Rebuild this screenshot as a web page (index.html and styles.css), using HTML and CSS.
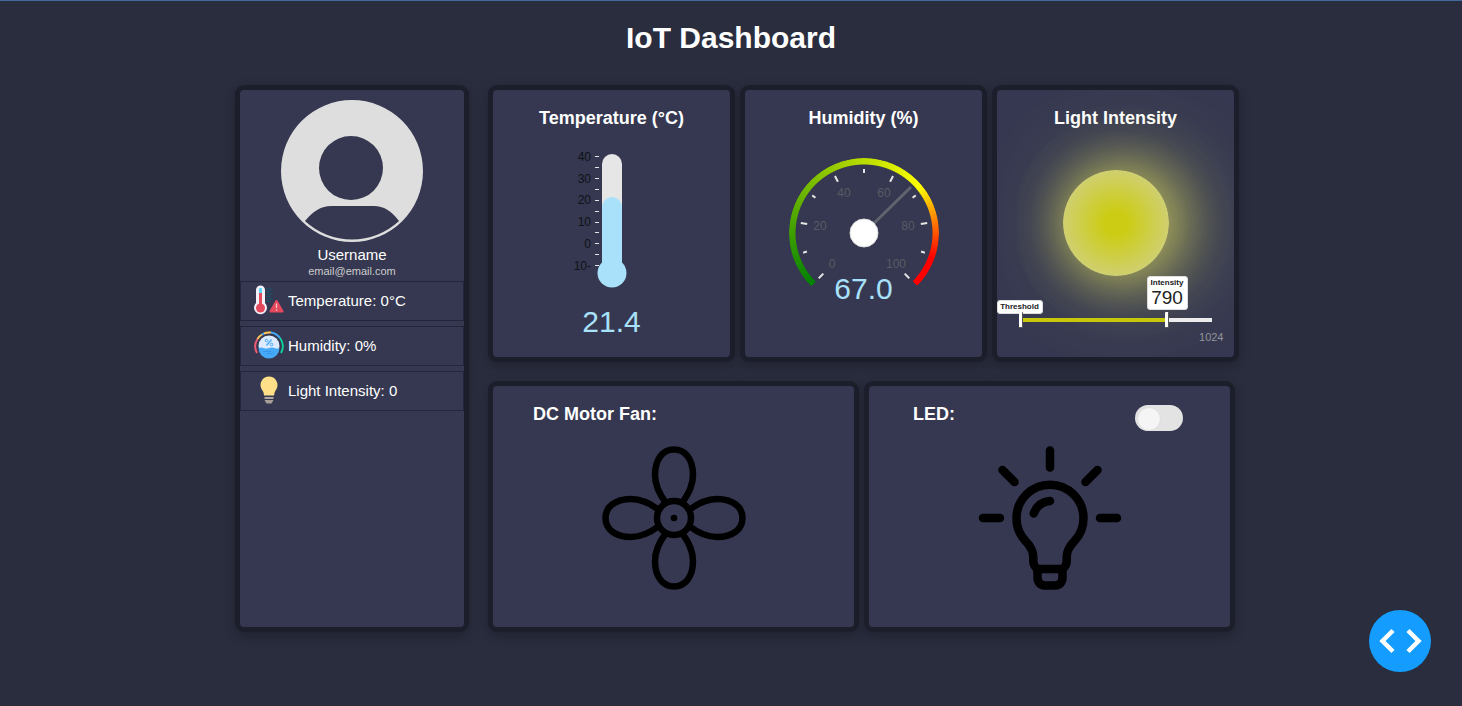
FILE: index.html
```html
<!DOCTYPE html>
<html lang="en">
<head>
<meta charset="utf-8">
<meta name="viewport" content="width=device-width, initial-scale=1">
<title>IoT Dashboard</title>
<link rel="stylesheet" href="styles.css">
</head>
<body>
<header class="page-header"><h1>IoT Dashboard</h1></header>
<main class="dashboard">
  <aside class="panel sidebar">
    <svg class="avatar" viewBox="0 0 142 142" aria-hidden="true">
      <path fill="#dedede" fill-rule="evenodd" d="M71 0a71 71 0 1 1 0 142a71 71 0 1 1 0-142zM70 36a32 32 0 1 0 0 64a32 32 0 1 0 0-64zM24 121Q36 106 50 106H93Q107 106 118 121A69 69 0 0 1 24 121z"/>
    </svg>
    <div class="username">Username</div>
    <div class="email">email@email.com</div>
    <ul class="readings">
      <li class="reading">
        <svg class="reading-icon" viewBox="0 0 30 30" aria-hidden="true">
          <path d="M2 5a4.500 4.500 0 0 1 9 0v13a6.500 6.500 0 1 1-9 0z" fill="#f4f0fa"/>
          <rect x="5" y="3" width="3" height="6" rx="1" fill="#55d8f5"/>
          <rect x="5" y="8" width="3" height="14" fill="#e4485d"/>
          <circle cx="6.500" cy="23" r="4.500" fill="#e4485d"/>
          <path d="M12.500 4h6M12.500 6.500h4M12.500 9h6M12.500 11.500h4M12.500 14h6M12.500 16.500h4" stroke="#14576f"/>
          <path d="M21.500 15.500q1-1 2 0l6 10.500q.5 1.500-1 1.500h-12q-1.500 0-1-1.500z" fill="#e4485d"/>
          <path d="M22.500 18.500v4.500M22.500 24.300v1.500" stroke="#f5c5cf" stroke-width="1.300"/>
        </svg>
        <span>Temperature: 0°C</span>
      </li>
      <li class="reading">
        <svg class="reading-icon" viewBox="0 0 30 30" aria-hidden="true">
          <g fill="none" stroke-width="2">
            <path d="M3 23A13.500 13.500 0 0 1 3.500 9" stroke="#ef5b72"/>
            <path d="M3.500 9A13.500 13.500 0 0 1 8 4.500" stroke="#ffc857"/>
            <path d="M8 4.500l2-1" stroke="#45a9f5"/>
            <path d="M10 3.500A13.500 13.500 0 0 1 17 2.500" stroke="#ffc857"/>
            <path d="M17 2.500A13.500 13.500 0 0 1 26 8" stroke="#45a9f5"/>
            <path d="M26 8A13.500 13.500 0 0 1 27 23" stroke="#0bd39a"/>
          </g>
          <circle cx="15" cy="16" r="10.500" fill="#dcebff"/>
          <path d="M4.500 18Q7 17 9.500 18T15 18T20.500 18T25.500 18A10.500 10.500 0 0 1 4.500 18z" fill="#46a9f7"/>
          <path d="M9 21.500h8M13 23.500h6" stroke="#3597e6"/>
          <path d="M17.500 9.500l-5 6" stroke="#46a9f7" stroke-width="1.300"/>
          <circle cx="12.500" cy="10.500" r="1.300" fill="none" stroke="#46a9f7"/>
          <circle cx="17.500" cy="14.500" r="1.300" fill="none" stroke="#46a9f7"/>
        </svg>
        <span>Humidity: 0%</span>
      </li>
      <li class="reading">
        <svg class="reading-icon" viewBox="0 0 30 30" aria-hidden="true">
          <path d="M10 20Q10 17 7.500 14A8.500 8.500 0 1 1 22.500 14Q20 17 20 20.500H10z" fill="#ffdf87"/>
          <path d="M10.500 22h9v2h-9z" fill="#b0a7a0"/>
          <path d="M10.500 25h9l-2 3.500h-5z" fill="#a79e98"/>
        </svg>
        <span>Light Intensity: 0</span>
      </li>
    </ul>
  </aside>

  <div class="content">
    <div class="row gauges">
      <section class="panel gauge-card">
        <h2>Temperature (°C)</h2>
        <svg class="gauge" width="238" height="150" viewBox="0 0 238 150" aria-hidden="true">
          <rect x="109" y="13" width="20" height="125" rx="10" fill="#e6e6e6"/>
          <path d="M109 66a10 10 0 0 1 20 0v56h-20z" fill="#a9e1fb"/>
          <circle cx="119" cy="132" r="14.500" fill="#a9e1fb"/>
          <path class="scale-ticks" d="M102 15.500h4M102 26.500h4M102 37.500h4M102 48.500h4M102 59.500h4M102 70.500h4M102 81.500h4M102 91.500h4M102 102.500h4M102 113.500h4M102 124.500h4"/>
          <g class="thermo-labels">
            <text x="98" y="20">40</text><text x="98" y="42">30</text><text x="98" y="63">20</text>
            <text x="98" y="85">10</text><text x="98" y="107">0</text><text x="98" y="129">10-</text>
          </g>
        </svg>
        <output class="value temperature-value">21.4</output>
      </section>

      <section class="panel gauge-card">
        <h2>Humidity (%)</h2>
        <div class="dial">
          <div class="dial-arc"></div>
          <svg class="dial-face" viewBox="-75 -75 150 150" aria-hidden="true">
            <g class="dial-ticks">
              <path d="M0-64v6.500" transform="rotate(-135)"/>
              <path d="M0-64v6.500" transform="rotate(-81)"/>
              <path d="M0-64v6.500" transform="rotate(-27)"/>
              <path d="M0-64v6.500" transform="rotate(27)"/>
              <path d="M0-64v6.500" transform="rotate(81)"/>
              <path d="M0-64v6.500" transform="rotate(135)"/>
              <path d="M0-64v4" transform="rotate(-108)"/>
              <path d="M0-64v4" transform="rotate(-54)"/>
              <path d="M0-64v4"/>
              <path d="M0-64v4" transform="rotate(54)"/>
              <path d="M0-64v4" transform="rotate(108)"/>
            </g>
            <g class="dial-labels">
              <text x="-32" y="35">0</text><text x="-44" y="-3">20</text><text x="-20" y="-36">40</text>
              <text x="20" y="-36">60</text><text x="44" y="-3">80</text><text x="32" y="35">100</text>
            </g>
            <path d="M0 0L47-46" stroke="#60646e" stroke-width="3"/>
            <circle r="14" fill="#fff" stroke="#ddd"/>
          </svg>
        </div>
        <output class="value humidity-value">67.0</output>
      </section>

      <section class="panel gauge-card">
        <h2>Light Intensity</h2>
        <div class="sun"></div>
        <div class="slider">
          <input class="range range-intensity" type="range" min="0" max="1024" value="790" aria-label="Intensity">
          <input class="range range-threshold" type="range" min="0" max="1024" value="0" aria-label="Threshold">
          <div class="tag tag-threshold">Threshold</div>
          <div class="tag tag-intensity">Intensity<output class="tag-value">790</output></div>
          <span class="slider-max">1024</span>
        </div>
      </section>
    </div>

    <div class="row devices">
      <section class="panel device-card">
        <div class="device-head fan-head"><h2>DC Motor Fan:</h2></div>
        <svg class="device-icon" viewBox="-72 -72 144 144" aria-hidden="true">
          <g fill="none" stroke="#000" stroke-width="6.500">
            <circle r="17"/>
            <path d="M-8-15C-14-23-19-32-19-43C-19-59-11-68.500 0-68.500C11-68.500 19-59 19-43C19-32 14-23 8-15"/>
            <path d="M-8-15C-14-23-19-32-19-43C-19-59-11-68.500 0-68.500C11-68.500 19-59 19-43C19-32 14-23 8-15" transform="rotate(90)"/>
            <path d="M-8-15C-14-23-19-32-19-43C-19-59-11-68.500 0-68.500C11-68.500 19-59 19-43C19-32 14-23 8-15" transform="rotate(180)"/>
            <path d="M-8-15C-14-23-19-32-19-43C-19-59-11-68.500 0-68.500C11-68.500 19-59 19-43C19-32 14-23 8-15" transform="rotate(270)"/>
          </g>
          <circle r="3.300"/>
        </svg>
      </section>
      <section class="panel device-card">
        <div class="device-head led-head">
          <h2><label for="led">LED:</label></h2>
          <input class="toggle" id="led" type="checkbox">
        </div>
        <svg class="device-icon" viewBox="-72 -72 144 144" aria-hidden="true">
          <g fill="none" stroke="#000" stroke-width="8.500" stroke-linecap="round">
            <path d="M0-67.500V-50.500M-67-0H-50M67 0H50M-47.500-48L-35.500-36M47.500-48L35.500-36"/>
            <path d="M-12.500 51Q-16.700 48-16.700 43V39Q-16.700 31-24.500 23A33.500 33.500 0 1 1 24.500 23Q16.700 31 16.700 39V43Q16.700 48 12.500 51z" stroke-linejoin="round"/>
            <path d="M-12.500 51V59Q-12.500 67.500-4 67.500H4Q12.500 67.500 12.500 59V51"/>
            <path d="M0-17Q-12-16-16.300-4.500"/>
          </g>
        </svg>
      </section>
    </div>
  </div>
</main>
<button class="code-button" type="button" aria-label="View code">
  <svg viewBox="-31 -31 62 62" aria-hidden="true"><path d="M-7-10.500L-17.500 0L-7 10.500M8-10.500L18.500 0L8 10.500" fill="none" stroke="#fff" stroke-width="4.500"/></svg>
</button>
</body>
</html>
```
FILE: styles.css
```css
* { box-sizing: border-box; }
body {
  margin: 0;
  min-height: 100vh;
  border-top: 1px solid #41699b;
  background: #2a2d3e;
  color: #fff;
  font-family: "Liberation Sans", Arial, sans-serif;
  font-size: 15px;
}
h1, h2 { margin: 0; font-weight: bold; }
.page-header { padding: 19px 0 29px; text-align: center; }
h1 { font-size: 30px; line-height: 36px; }
h2 { font-size: 18px; line-height: 24px; }
.dashboard {
  display: flex;
  gap: 19px;
  max-width: 1016px;
  margin: 0 auto;
  padding-left: 12px;
}
.panel {
  border: 5px solid #1c1f2b;
  border-radius: 9px;
  background: #353850;
  box-shadow: 0 4px 12px rgba(0, 0, 0, 0.25);
}
.sidebar {
  flex: 0 0 234px;
  display: flex;
  flex-direction: column;
  align-items: center;
  padding-top: 10px;
}
.avatar { width: 142px; height: 142px; }
.username { margin-top: 4px; line-height: 18px; }
.email { color: #ccc; font-size: 11px; line-height: 14px; }
.readings {
  display: grid;
  gap: 5px;
  width: 100%;
  margin: 3px 0 0;
  padding: 0;
  list-style: none;
}
.reading {
  display: flex;
  align-items: center;
  gap: 4px;
  height: 40px;
  padding: 0 0 2px 13px;
  border: 1px solid #23263a;
}
.reading-icon { width: 30px; height: 30px; }
.content {
  flex: 1;
  display: grid;
  gap: 19px;
}
.row { display: grid; gap: 5px; }
.gauges { grid-template-columns: repeat(3, minmax(0, 1fr)); }
.devices { grid-template-columns: repeat(2, minmax(0, 1fr)); margin-right: 4px; }
.gauge-card {
  display: flex;
  flex-direction: column;
  align-items: center;
  height: 277px;
  padding-top: 16px;
  overflow: hidden;
}
.gauge { margin-top: 11px; }
.scale-ticks { stroke: #e6e6e6; stroke-width: 1; }
.thermo-labels { fill: #101218; font-size: 12px; text-anchor: end; }
.value { color: #a9e1fb; font-size: 30px; line-height: 36px; }
.temperature-value { margin-top: 13px; }
.dial {
  position: relative;
  width: 150px;
  height: 150px;
  margin-top: 28px;
}
.dial-arc {
  width: 100%;
  height: 100%;
  border-radius: 50%;
  background: conic-gradient(from 225deg, #008000, #ff0 185deg, #f00 245deg, #f00 270deg, transparent 270deg);
  -webkit-mask: radial-gradient(circle closest-side, transparent 68px, #000 69px);
  mask: radial-gradient(circle closest-side, transparent 68px, #000 69px);
}
.dial-face { position: absolute; inset: 0; }
.dial-ticks { stroke: #e6e6e6; stroke-width: 2; }
.dial-labels { fill: #585c65; font-size: 12px; text-anchor: middle; }
.humidity-value { margin-top: -37px; }
.sun {
  flex: none;
  width: 106px;
  height: 106px;
  margin-top: 40px;
  border-radius: 50%;
  background: radial-gradient(circle, #cccc14 15%, #d0d080 80%);
  box-shadow: 0 0 150px rgba(255, 255, 255, 0.15), 16px 0 80px rgba(200, 200, 90, 0.9), 0 0 50px rgba(200, 200, 80, 0.7);
}
.slider {
  position: relative;
  width: 194px;
  height: 16px;
  margin-top: 36px;
}
.range {
  -webkit-appearance: none;
  appearance: none;
  position: absolute;
  left: 0;
  top: 0;
  width: 100%;
  height: 16px;
  margin: 0;
  background: none;
}
.range-intensity { background: linear-gradient(to right, #c8c80a 148px, #ececec 148px) center / calc(100% - 2px) 4px no-repeat; }
.range-threshold { pointer-events: none; z-index: 2; }
.range::-webkit-slider-thumb {
  -webkit-appearance: none;
  width: 4px;
  height: 16px;
  border: 1px solid #555;
  border-width: 0 1px 1px 0;
  border-radius: 1px;
  background: #fff;
  pointer-events: auto;
}
.tag {
  position: absolute;
  display: flex;
  flex-direction: column;
  align-items: center;
  border: 1px solid #ddd;
  border-radius: 3px;
  background: #fff;
  color: #222;
  font-size: 8px;
  font-weight: bold;
  line-height: 12px;
}
.tag-threshold { left: -22px; bottom: 14px; width: 46px; }
.tag-intensity { left: 128px; bottom: 18px; width: 41px; height: 34px; }
.tag-value { font-size: 19px; font-weight: normal; line-height: 18px; }
.slider-max {
  position: absolute;
  right: -11px;
  top: 18px;
  color: #92949d;
  font-size: 11px;
  line-height: 14px;
}
.device-card {
  display: flex;
  flex-direction: column;
  align-items: center;
  height: 251px;
  padding-top: 16px;
}
.device-head {
  display: flex;
  justify-content: space-between;
  width: 100%;
  height: 27px;
}
.fan-head { padding: 0 40px; }
.led-head { padding: 0 47px 0 44px; }
.toggle {
  -webkit-appearance: none;
  appearance: none;
  width: 48px;
  height: 26px;
  margin: 3px 0 0;
  padding: 2px;
  border-radius: 13px;
  background: #e3e3e3;
}
.toggle::before {
  content: "";
  display: block;
  width: 22px;
  height: 22px;
  border: 1px solid #ddd;
  border-radius: 50%;
  background: #f5f5f5;
}
.toggle:checked::before { margin-left: auto; }
.device-icon { width: 144px; height: 144px; margin-top: 17px; }
.code-button {
  position: fixed;
  right: 31px;
  bottom: 34px;
  width: 62px;
  height: 62px;
  padding: 0;
  border: 0;
  border-radius: 50%;
  background: #149dff;
}
.code-button svg { display: block; }
```
